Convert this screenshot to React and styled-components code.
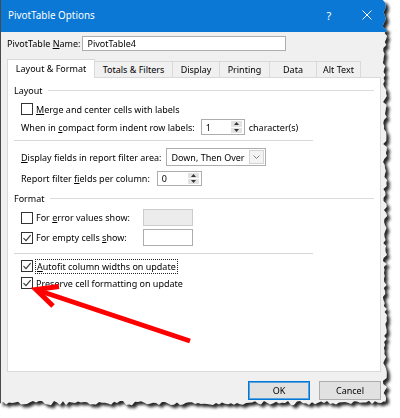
import React from "react";
import styled, { createGlobalStyle } from "styled-components";

const GlobalStyle = createGlobalStyle`
  html, body {
    margin: 0;
    padding: 0;
    background: #ffffff;
  }
  body {
    font-family: "Noto Sans", "DejaVu Sans", sans-serif;
    font-size: 9px;
    color: #000000;
  }
`;

const Shot = styled.div`
  position: relative;
  width: 400px;
  height: 418px;
  overflow: hidden;
`;

const Shadow = styled.div`
  width: 398px;
  filter: drop-shadow(3.5px 3.5px 1.8px rgba(0, 0, 0, 0.85));
`;

const Dialog = styled.div`
  width: 390px;
  height: 408px;
  box-sizing: border-box;
  background: #f0f0f0;
  border-left: 1px solid #4a4a4a;
  display: flex;
  flex-direction: column;
  clip-path: ${(p) => p.$clip};
`;

const TitleBar = styled.div`
  flex: none;
  height: 30px;
  background: #0a78d4;
  color: #ffffff;
  display: flex;
  align-items: center;
  padding: 0 4px 2px 7px;
  font-size: 9.9px;
`;

const TitleText = styled.div`
  flex: 1;
`;

const TitleButton = styled.div`
  width: 38px;
  display: flex;
  justify-content: center;
  align-items: center;
  font-size: 11px;
`;

const Body = styled.div`
  padding: 0 9px 0 6px;
  display: flex;
  flex-direction: column;
`;

const NameRow = styled.div`
  display: flex;
  align-items: center;
  height: 15px;
  margin-top: 4px;
  gap: 2px;
`;

const TextBox = styled.div`
  box-sizing: border-box;
  width: ${(p) => p.$w}px;
  height: ${(p) => p.$h}px;
  border: 1px solid ${(p) => (p.$disabled ? "#cccccc" : "#adadad")};
  background: ${(p) => (p.$disabled ? "#ececec" : "#ffffff")};
  display: flex;
  align-items: center;
  padding-left: 4px;
`;

const U = styled.span`
  text-decoration: underline;
  text-underline-offset: 1px;
`;

const TabStrip = styled.div`
  display: flex;
  align-items: flex-end;
  height: 18px;
  margin-top: 8px;
`;

const Tab = styled.div`
  box-sizing: border-box;
  width: ${(p) => p.$w}px;
  height: ${(p) => (p.$active ? 19 : 16)}px;
  margin-bottom: ${(p) => (p.$active ? -1 : 0)}px;
  position: relative;
  z-index: ${(p) => (p.$active ? 1 : 0)};
  background: ${(p) => (p.$active ? "#ffffff" : "#f0f0f0")};
  border: 1px solid #d9d9d9;
  border-bottom: none;
  border-left: ${(p) => (p.$first ? "1px solid #d9d9d9" : "none")};
  display: flex;
  justify-content: center;
  align-items: center;
  padding-bottom: ${(p) => (p.$active ? 2 : 0)}px;
`;

const Panel = styled.div`
  box-sizing: border-box;
  height: 295px;
  background: #ffffff;
  border: 1px solid #d9d9d9;
  padding: 5px 6px 0;
  display: flex;
  flex-direction: column;
`;

const GroupHeader = styled.div`
  display: flex;
  align-items: center;
  gap: 5px;
  height: 14px;
  margin-top: ${(p) => p.$mt || 0}px;
  &::after {
    content: "";
    flex: 1;
    height: 1px;
    background: #dcdcdc;
  }
`;

const Separator = styled.div`
  width: 299px;
  height: 1px;
  background: #d7d7d7;
  margin-top: ${(p) => p.$mt}px;
`;

const Row = styled.div`
  display: flex;
  align-items: center;
  gap: ${(p) => (p.$gap ?? 5)}px;
  margin-left: 7px;
  margin-top: ${(p) => p.$mt}px;
  height: ${(p) => p.$h}px;
`;

const CheckRow = styled.div`
  display: flex;
  align-items: center;
  gap: 3px;
  width: ${(p) => (p.$w ? `${p.$w}px` : "auto")};
`;

const Box = styled.div`
  box-sizing: border-box;
  width: 12px;
  height: 12px;
  border: 1px solid #333333;
  background: #ffffff;
  display: flex;
  align-items: center;
  justify-content: center;
`;

const Focus = styled.span`
  outline: 1px dotted #222222;
  outline-offset: 0px;
  padding: 0 1px;
`;

const Suffix = styled.span`
  margin-left: -2px;
`;

const SpinBox = styled.div`
  box-sizing: border-box;
  width: ${(p) => p.$w}px;
  height: ${(p) => p.$h}px;
  border: 1px solid #adadad;
  background: #ffffff;
  display: flex;
`;

const SpinValue = styled.div`
  flex: 1;
  display: flex;
  align-items: center;
  padding-left: 4px;
`;

const SpinButtons = styled.div`
  width: 11px;
  margin: 1px 2px 1px 0;
  display: flex;
  flex-direction: column;
  gap: 1px;
`;

const SpinButton = styled.div`
  flex: 1;
  background: #e3e3e3;
  display: flex;
  align-items: center;
  justify-content: center;
`;

const Combo = styled.div`
  box-sizing: border-box;
  width: 100px;
  height: 18px;
  border: 1px solid #adadad;
  background: #ffffff;
  display: flex;
`;

const ComboText = styled.div`
  flex: 1;
  display: flex;
  align-items: center;
  padding-left: 4px;
`;

const ComboArrow = styled.div`
  width: 13px;
  margin: 1px;
  background: #f3f3f3;
  border: 1px solid #d4d4d4;
  display: flex;
  align-items: center;
  justify-content: center;
`;

const Buttons = styled.div`
  display: flex;
  justify-content: flex-end;
  gap: 9px;
  margin-top: 9px;
`;

const Button = styled.div`
  box-sizing: border-box;
  width: 62px;
  height: 19px;
  background: #e1e1e1;
  border: 1px solid ${(p) => (p.$primary ? "#0078d7" : "#adadad")};
  box-shadow: ${(p) => (p.$primary ? "inset 0 0 0 1px #5aa0dc" : "none")};
  display: flex;
  align-items: center;
  justify-content: center;
`;

const Overlay = styled.svg`
  position: absolute;
  left: 0;
  top: 0;
  pointer-events: none;
`;

const tabs = [
  { label: "Layout & Format", w: 88 },
  { label: "Totals & Filters", w: 78 },
  { label: "Display", w: 47 },
  { label: "Printing", w: 50 },
  { label: "Data", w: 47 },
  { label: "Alt Text", w: 44 },
];

// jagged "torn paper" outline for the right and bottom edges
const tornEdge = () => {
  const jit = (i) => {
    const s = Math.sin(i * 12.9898) * 43758.5453;
    return (s - Math.floor(s)) * 2 - 1;
  };
  const pts = ["0px 0px"];
  for (let y = 0; y <= 402; y += 3) {
    pts.push(`${(385 + jit(y) * 2.2).toFixed(1)}px ${y}px`);
  }
  for (let x = 384; x >= 0; x -= 3) {
    pts.push(`${x}px ${(403 + jit(x + 500) * 2.2).toFixed(1)}px`);
  }
  pts.push("0px 403px");
  return `polygon(${pts.join(", ")})`;
};

const Check = () => (
  <svg width="10" height="10" viewBox="0 0 10 10">
    <polyline points="1.5,5.2 4,7.6 8.6,2.2" fill="none" stroke="#333" strokeWidth="1.1" />
  </svg>
);

const CheckBox = ({ checked }) => <Box>{checked && <Check />}</Box>;

const Spinner = ({ value, w, h }) => (
  <SpinBox $w={w} $h={h}>
    <SpinValue>{value}</SpinValue>
    <SpinButtons>
      <SpinButton>
        <svg width="5" height="3" viewBox="0 0 5 3">
          <polygon points="0,3 2.5,0 5,3" fill="#333" />
        </svg>
      </SpinButton>
      <SpinButton>
        <svg width="5" height="3" viewBox="0 0 5 3">
          <polygon points="0,0 2.5,3 5,0" fill="#333" />
        </svg>
      </SpinButton>
    </SpinButtons>
  </SpinBox>
);

export default function App() {
  return (
    <Shot>
      <GlobalStyle />
      <Shadow>
        <Dialog $clip={tornEdge()}>
          <TitleBar>
            <TitleText>PivotTable Options</TitleText>
            <TitleButton>?</TitleButton>
            <TitleButton>
              <svg width="10" height="10" viewBox="0 0 10 10">
                <path d="M0.5 0.5 L9.5 9.5 M9.5 0.5 L0.5 9.5" stroke="#fff" strokeWidth="1" />
              </svg>
            </TitleButton>
          </TitleBar>
          <Body>
            <NameRow>
              <span>
                PivotTable <U>N</U>ame:
              </span>
              <TextBox $w={204} $h={15}>PivotTable4</TextBox>
            </NameRow>
            <TabStrip>
              {tabs.map((t, i) => (
                <Tab key={t.label} $w={t.w} $active={i === 0} $first={i === 0}>
                  {t.label}
                </Tab>
              ))}
            </TabStrip>
            <Panel>
              <GroupHeader>Layout</GroupHeader>
              <Row $mt={4} $h={16}>
                <CheckRow>
                  <CheckBox />
                  <span>
                    <U>M</U>erge and center cells with labels
                  </span>
                </CheckRow>
              </Row>
              <Row $mt={2} $h={16} $gap={6}>
                <span>
                  When in <U>c</U>ompact form indent row labels:
                </span>
                <Spinner value="1" w={44} h={16} />
                <Suffix>character(s)</Suffix>
              </Row>
              <Separator $mt={5} />
              <Row $mt={7} $h={18}>
                <span>
                  <U>D</U>isplay fields in report filter area:
                </span>
                <Combo>
                  <ComboText>Down, Then Over</ComboText>
                  <ComboArrow>
                    <svg width="7" height="4" viewBox="0 0 7 4">
                      <polyline points="0.5,0.5 3.5,3.5 6.5,0.5" fill="none" stroke="#777" strokeWidth="0.9" />
                    </svg>
                  </ComboArrow>
                </Combo>
              </Row>
              <Row $mt={5} $h={15} $gap={7}>
                <span>
                  Report filter <U>f</U>ields per column:
                </span>
                <Spinner value="0" w={45} h={15} />
              </Row>
              <GroupHeader $mt={5}>Format</GroupHeader>
              <Row $mt={4} $h={17} $gap={0}>
                <CheckRow $w={122}>
                  <CheckBox />
                  <span>
                    For <U>e</U>rror values show:
                  </span>
                </CheckRow>
                <TextBox $w={50} $h={17} $disabled />
              </Row>
              <Row $mt={3} $h={17} $gap={0}>
                <CheckRow $w={122}>
                  <CheckBox checked />
                  <span>
                    For empty cells <U>s</U>how:
                  </span>
                </CheckRow>
                <TextBox $w={50} $h={17} />
              </Row>
              <Separator $mt={7} />
              <Row $mt={5} $h={14}>
                <CheckRow>
                  <CheckBox checked />
                  <Focus>
                    <U>A</U>utofit column widths on update
                  </Focus>
                </CheckRow>
              </Row>
              <Row $mt={3} $h={14}>
                <CheckRow>
                  <CheckBox checked />
                  <span>
                    <U>P</U>reserve cell formatting on update
                  </span>
                </CheckRow>
              </Row>
            </Panel>
            <Buttons>
              <Button $primary>OK</Button>
              <Button>Cancel</Button>
            </Buttons>
          </Body>
        </Dialog>
      </Shadow>
      <Overlay width="400" height="418" viewBox="0 0 400 418">
        <line x1="190" y1="341" x2="40" y2="291" stroke="#ff0000" strokeWidth="5" />
        <polyline
          points="59,286.5 36,289.5 53,306"
          fill="none"
          stroke="#ff0000"
          strokeWidth="5"
          strokeLinejoin="miter"
        />
      </Overlay>
    </Shot>
  );
}
